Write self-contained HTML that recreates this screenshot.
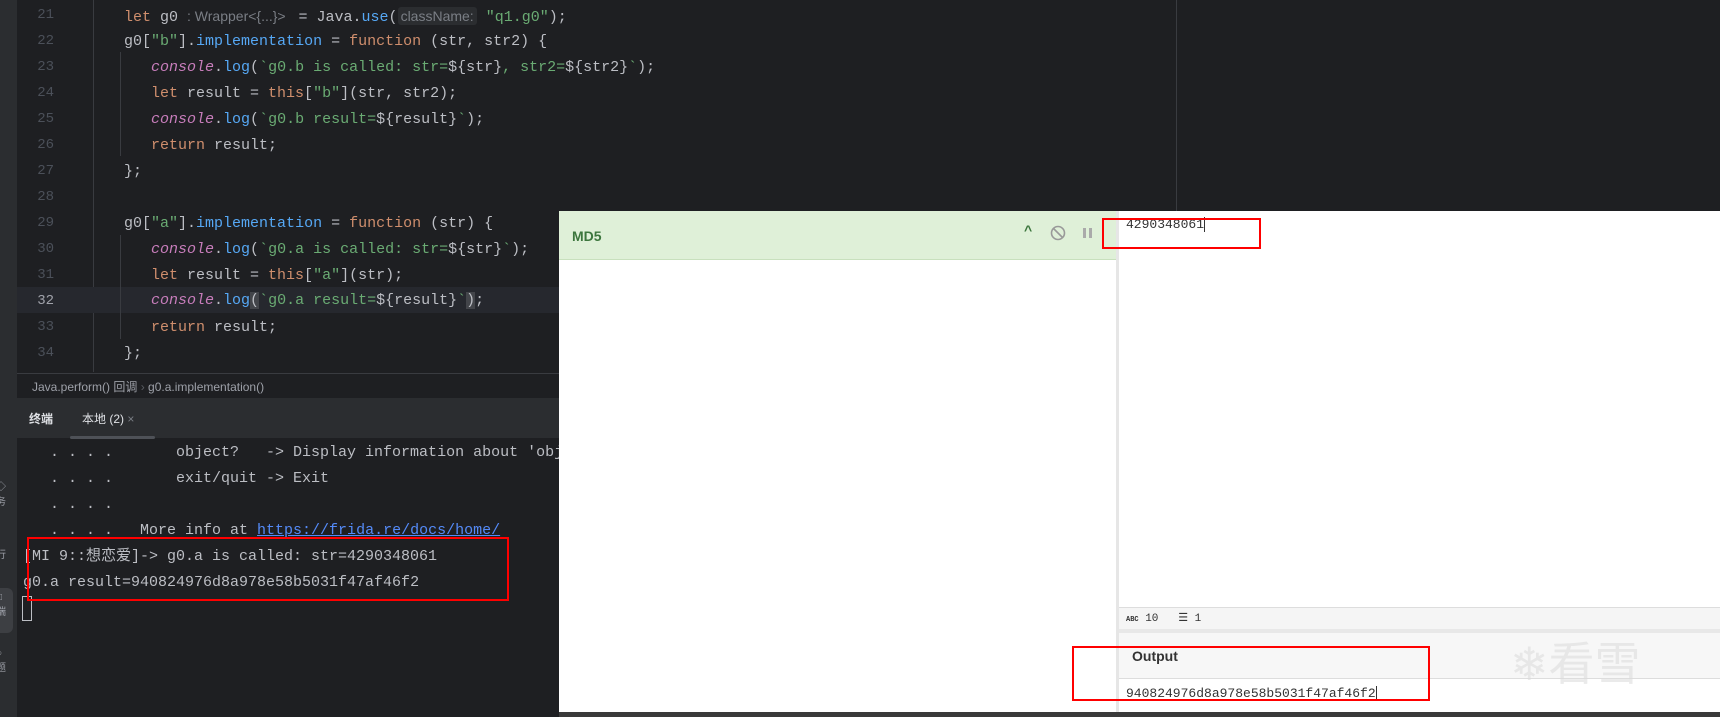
<!DOCTYPE html>
<html><head><meta charset="utf-8"><style>
*{margin:0;padding:0;box-sizing:border-box}
body{width:1720px;height:717px;overflow:hidden;background:#1e1f22;position:relative;font-family:"Liberation Mono","Noto Sans CJK SC",monospace}
.a{position:absolute;white-space:pre}
.code{font-size:15px;color:#bcbec4;line-height:26px}
.ln{color:#4b5059;width:40px;text-align:right;left:14px;font-size:14px}
.k{color:#cf8e6d}.f{color:#56a8f5}.s{color:#6aab73}.c{color:#c77dbb;font-style:italic}
.sans{font-family:"Liberation Sans","Noto Sans CJK SC",sans-serif}
.red{position:absolute;border:2px solid #f00}
</style></head><body>
<div class="a" style="left:0;top:0;width:17px;height:717px;background:#2b2d30"></div>
<div class="a" style="left:0;top:588px;width:13px;height:45px;background:#3d3f43;border-radius:0 6px 6px 0"></div>
<div class="a sans" style="left:-4px;top:478px;font-size:10px;color:#9da0a8">◇<br>务</div>
<div class="a sans" style="left:-4px;top:535px;font-size:10px;color:#9da0a8">›<br>行</div>
<div class="a sans" style="left:-4px;top:592px;font-size:10px;color:#9da0a8">□<br>端</div>
<div class="a sans" style="left:-4px;top:648px;font-size:10px;color:#9da0a8">○<br>题</div>
<div class="a" style="left:93px;top:0;width:1px;height:372px;background:#393b40"></div>
<div class="a" style="left:17px;top:287px;width:1160px;height:26px;background:#26282e"></div>
<div class="a" style="left:1176px;top:0;width:1px;height:211px;background:#393b40"></div>
<div class="a" style="left:120px;top:52px;width:1px;height:104px;background:#393b40"></div>
<div class="a" style="left:120px;top:235px;width:1px;height:104px;background:#393b40"></div>
<div class="code">
<div class="a ln" style="top:2px">21</div>
<div class="a ln" style="top:28px">22</div>
<div class="a ln" style="top:54px">23</div>
<div class="a ln" style="top:80px">24</div>
<div class="a ln" style="top:106px">25</div>
<div class="a ln" style="top:132px">26</div>
<div class="a ln" style="top:158px">27</div>
<div class="a ln" style="top:184px">28</div>
<div class="a ln" style="top:210px">29</div>
<div class="a ln" style="top:236px">30</div>
<div class="a ln" style="top:262px">31</div>
<div class="a ln" style="top:288px;color:#a1a3ab">32</div>
<div class="a ln" style="top:314px">33</div>
<div class="a ln" style="top:340px">34</div>
<div class="a" style="left:124px;top:3px"><span class="k">let</span> g0 <span class="sans" style="color:#7a7e85;font-size:14px">: Wrapper&lt;{...}&gt; </span> = Java.<span class="f">use</span>(<span class="sans" style="color:#7a7e85;font-size:14px;background:#2b2d30;border-radius:3px;padding:1px 3px">className:</span> <span class="s">"q1.g0"</span>);</div>
<div class="a" style="left:124px;top:29px">g0[<span class="s">"b"</span>].<span class="f">implementation</span> = <span class="k">function</span> (str, str2) {</div>
<div class="a" style="left:151px;top:55px"><span class="c">console</span>.<span class="f">log</span>(<span class="s">`g0.b is called: str=</span>${str}<span class="s">, str2=</span>${str2}<span class="s">`</span>);</div>
<div class="a" style="left:151px;top:81px"><span class="k">let</span> result = <span class="k">this</span>[<span class="s">"b"</span>](str, str2);</div>
<div class="a" style="left:151px;top:107px"><span class="c">console</span>.<span class="f">log</span>(<span class="s">`g0.b result=</span>${result}<span class="s">`</span>);</div>
<div class="a" style="left:151px;top:133px"><span class="k">return</span> result;</div>
<div class="a" style="left:124px;top:159px">};</div>
<div class="a" style="left:124px;top:211px">g0[<span class="s">"a"</span>].<span class="f">implementation</span> = <span class="k">function</span> (str) {</div>
<div class="a" style="left:151px;top:237px"><span class="c">console</span>.<span class="f">log</span>(<span class="s">`g0.a is called: str=</span>${str}<span class="s">`</span>);</div>
<div class="a" style="left:151px;top:263px"><span class="k">let</span> result = <span class="k">this</span>[<span class="s">"a"</span>](str);</div>
<div class="a" style="left:151px;top:288px"><span class="c">console</span>.<span class="f">log</span><span style="background:#43454a">(</span><span class="s">`g0.a result=</span>${result}<span class="s">`</span><span style="background:#43454a">)</span>;</div>
<div class="a" style="left:151px;top:315px"><span class="k">return</span> result;</div>
<div class="a" style="left:124px;top:341px">};</div>
</div>
<div class="a" style="left:17px;top:373px;width:560px;height:1px;background:#393b40"></div>
<div class="a sans" style="left:32px;top:378px;font-size:12px;color:#9da0a8">Java.perform() 回调 <span style="color:#5a5d63">›</span> g0.a.implementation()</div>
<div class="a" style="left:17px;top:398px;width:560px;height:40px;background:#2b2d30"></div>
<div class="a sans" style="left:29px;top:410px;font-size:12px;color:#dfe1e5;font-weight:bold">终端</div>
<div class="a sans" style="left:82px;top:410px;font-size:12px;color:#dfe1e5">本地 (2) <span style="color:#7a7e85">×</span></div>
<div class="a" style="left:70px;top:436px;width:85px;height:3px;background:#4e5157;border-radius:2px"></div>
<div class="code" style="color:#bcbec4">
<div class="a" style="left:50px;top:440px">. . . .       object?   -&gt; Display information about 'obj</div>
<div class="a" style="left:50px;top:466px">. . . .       exit/quit -&gt; Exit</div>
<div class="a" style="left:50px;top:492px">. . . .</div>
<div class="a" style="left:50px;top:518px">. . . .   More info at <span style="color:#548af7;text-decoration:underline">https://frida.re/docs/home/</span></div>
<div class="a" style="left:23px;top:544px">[MI 9::想恋爱]-&gt; g0.a is called: str=4290348061</div>
<div class="a" style="left:23px;top:570px">g0.a result=940824976d8a978e58b5031f47af46f2</div>
</div>
<div class="a" style="left:22px;top:596px;width:10px;height:25px;border:1px solid #bcbec4"></div>
<div class="red" style="left:27px;top:537px;width:482px;height:64px"></div>
<div class="a" style="left:559px;top:211px;width:1161px;height:501px;background:#fff"></div>
<div class="a" style="left:559px;top:211px;width:558px;height:49px;background:#dff0d8;border-bottom:1px solid #c8e0bd"></div>
<div class="a sans" style="left:572px;top:228px;font-size:14px;font-weight:bold;color:#3c763d">MD5</div>
<div class="a sans" style="left:1024px;top:222px;font-size:14px;color:#3c763d;font-weight:bold">^</div>
<svg class="a" style="left:1050px;top:225px" width="16" height="16"><circle cx="8" cy="8" r="6.5" fill="none" stroke="#999" stroke-width="1.6"/><path d="M3.5 3.5L12.5 12.5" stroke="#999" stroke-width="1.6"/></svg>
<div class="a" style="left:1083px;top:228px;width:3px;height:10px;background:#aaa"></div>
<div class="a" style="left:1089px;top:228px;width:3px;height:10px;background:#aaa"></div>
<div class="a" style="left:1116px;top:211px;width:3px;height:501px;background:#e6e6e6"></div>
<div class="a" style="left:1126px;top:217px;font-size:13px;color:#333">4290348061<span style="border-left:1px solid #333"></span></div>
<div class="red" style="left:1102px;top:218px;width:159px;height:31px"></div>
<div class="a" style="left:1119px;top:607px;width:601px;height:22px;background:#f5f5f5;border-top:1px solid #ddd"></div>
<div class="a" style="left:1126px;top:611px;font-size:11px;color:#333"><span style="font-size:7px;font-weight:bold">ABC</span> 10   ☰ 1</div>
<div class="a" style="left:1119px;top:629px;width:601px;height:4px;background:#e8e8e8"></div>
<div class="a" style="left:1119px;top:633px;width:601px;height:46px;background:#f7f7f7;border-bottom:1px solid #ddd"></div>
<div class="a sans" style="left:1132px;top:648px;font-size:14px;font-weight:bold;color:#333">Output</div>
<div class="a" style="left:1126px;top:686px;font-size:13px;color:#333">940824976d8a978e58b5031f47af46f2<span style="border-left:1px solid #333"></span></div>
<div class="red" style="left:1072px;top:646px;width:358px;height:55px"></div>
<div class="a sans" style="left:1510px;top:628px;font-size:46px;color:rgba(220,220,220,0.6)">❄看雪</div>
<div class="a" style="left:559px;top:712px;width:1161px;height:5px;background:#3a3a3a"></div>
</body></html>
